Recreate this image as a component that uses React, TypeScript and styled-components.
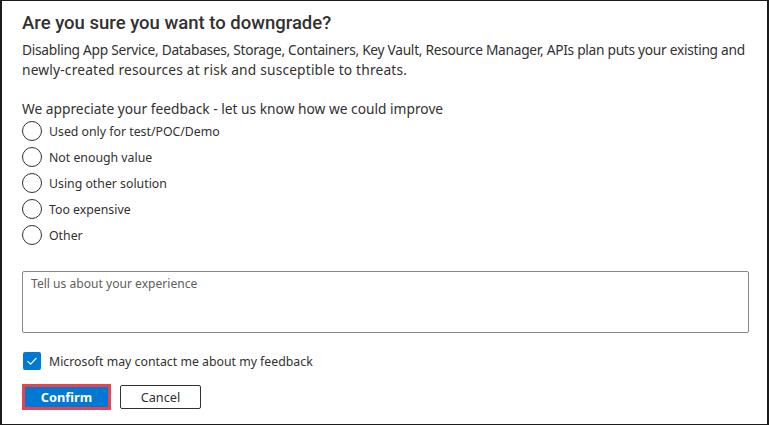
import React from "react";
import styled, { createGlobalStyle } from "styled-components";

const Global = createGlobalStyle`
  html, body { margin: 0; padding: 0; background: #fff; }
  body { font-family: "Noto Sans", "Liberation Sans", Arial, sans-serif; color: #323130; }
  * { box-sizing: border-box; }
`;

const Frame = styled.div`
  width: 769px;
  height: 425px;
  border: 1px solid #1b1b1b;
  border-left-width: 2px;
  border-right-width: 2px;
  padding: 11px 20px 0 20px;
  display: flex;
  flex-direction: column;
`;

const Title = styled.h1`
  margin: 0;
  font-family: Roboto, "Noto Sans", sans-serif;
  font-size: 18.5px;
  font-weight: 500;
  line-height: 22px;
  color: #323130;
`;

const Desc = styled.p`
  margin: 6px 0 0 0;
  font-size: 13.75px;
  line-height: 20px;
  white-space: nowrap;
  display: flex;
  flex-direction: column;
`;

const DescLine = styled.span<{ $spacing: number }>`
  letter-spacing: ${(p) => p.$spacing}px;
`;

const Prompt = styled.div`
  margin-top: 19px;
  font-size: 13.75px;
  line-height: 20px;
`;

const Options = styled.div`
  display: flex;
  flex-direction: column;
  gap: 6px;
  margin-top: 2px;
`;

const Option = styled.label`
  display: flex;
  align-items: center;
  height: 20px;
  gap: 7px;
  font-size: 12.3px;
`;

const Radio = styled.span`
  width: 20px;
  height: 20px;
  border-radius: 50%;
  border: 1px solid #323130;
  flex: none;
`;

const TextArea = styled.div`
  margin-top: 26px;
  height: 62px;
  width: 727px;
  border: 1px solid #8a8886;
  border-radius: 2px;
  padding: 4px 8px;
  font-size: 12.1px;
  line-height: 16px;
  color: #605e5c;
`;

const CheckRow = styled.label`
  display: flex;
  align-items: center;
  gap: 8px;
  margin-top: 19px;
  padding-left: 1px;
  font-size: 12.3px;
  height: 18px;
`;

const CheckBox = styled.span`
  width: 18px;
  height: 18px;
  border-radius: 2px;
  background: #0078d4;
  display: flex;
  align-items: center;
  justify-content: center;
  flex: none;
`;

const Buttons = styled.div`
  display: flex;
  align-items: center;
  gap: 9px;
  margin-top: 14px;
`;

const Highlight = styled.div`
  border: 3px solid #e8444e;
  display: flex;
`;

const Button = styled.button<{ $primary?: boolean }>`
  font-family: inherit;
  font-size: 12.75px;
  font-weight: ${(p) => (p.$primary ? 700 : 400)};
  height: ${(p) => (p.$primary ? "20px" : "24px")};
  width: ${(p) => (p.$primary ? "83px" : "81px")};
  border-radius: ${(p) => (p.$primary ? "0" : "2px")};
  border: ${(p) => (p.$primary ? "none" : "1px solid #323130")};
  background: ${(p) => (p.$primary ? "#0078d4" : "#fff")};
  color: ${(p) => (p.$primary ? "#fff" : "#323130")};
  padding: 0;
  line-height: 1;
  display: flex;
  align-items: center;
  justify-content: center;
`;

const options = [
  "Used only for test/POC/Demo",
  "Not enough value",
  "Using other solution",
  "Too expensive",
  "Other",
];

export default function App() {
  return (
    <>
      <Global />
      <Frame>
        <Title>Are you sure you want to downgrade?</Title>
        <Desc>
          <DescLine $spacing={-0.29}>
            Disabling App Service, Databases, Storage, Containers, Key Vault, Resource Manager, APIs plan puts your existing and
          </DescLine>
          <DescLine $spacing={0.18}>newly-created resources at risk and susceptible to threats.</DescLine>
        </Desc>
        <Prompt>We appreciate your feedback - let us know how we could improve</Prompt>
        <Options>
          {options.map((o) => (
            <Option key={o}>
              <Radio />
              {o}
            </Option>
          ))}
        </Options>
        <TextArea>Tell us about your experience</TextArea>
        <CheckRow>
          <CheckBox>
            <svg width="12" height="12" viewBox="0 0 12 12">
              <path d="M1.5 6.2 L4.5 9.2 L10.5 3" fill="none" stroke="#fff" strokeWidth="1.1" />
            </svg>
          </CheckBox>
          Microsoft may contact me about my feedback
        </CheckRow>
        <Buttons>
          <Highlight>
            <Button $primary>Confirm</Button>
          </Highlight>
          <Button>Cancel</Button>
        </Buttons>
      </Frame>
    </>
  );
}
